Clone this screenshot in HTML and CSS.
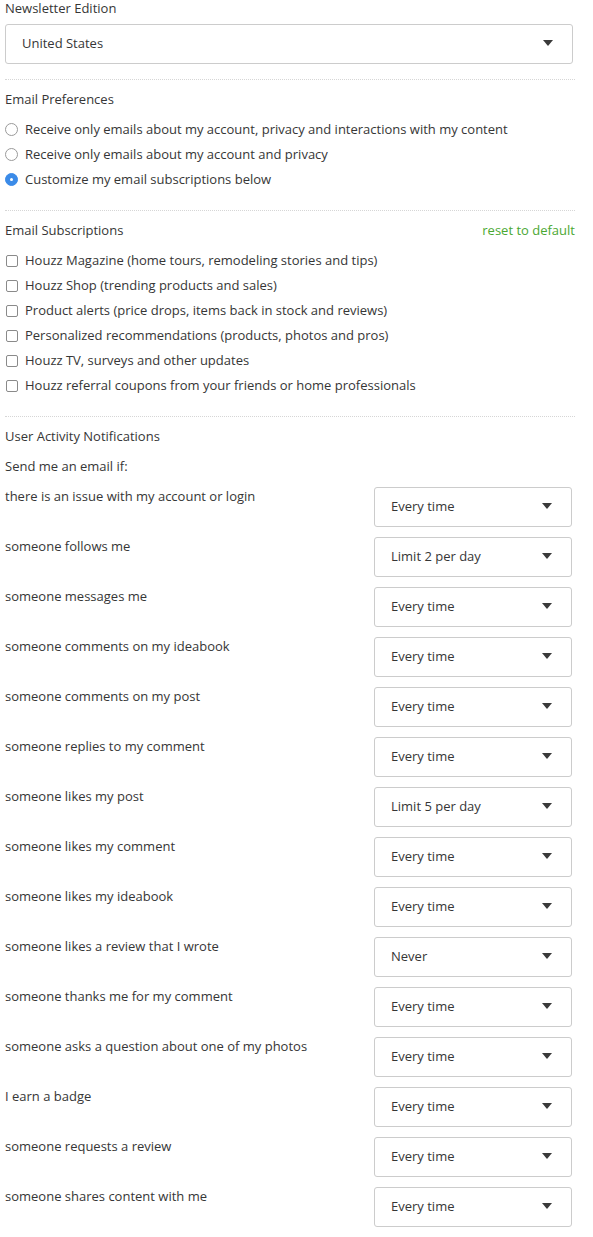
FILE: index.html
```html
<!DOCTYPE html>
<html>
<head>
<meta charset="utf-8">
<link rel="stylesheet" href="styles.css">
</head>
<body>
<div class="page">
  <section class="sec first">
    <div class="heading">Newsletter Edition</div>
    <div class="select wide"><span>United States</span><i class="caret"></i></div>
  </section>

  <section class="sec">
    <div class="heading">Email Preferences</div>
    <ul class="opts">
      <li><span class="radio"></span>Receive only emails about my account, privacy and interactions with my content</li>
      <li><span class="radio"></span>Receive only emails about my account and privacy</li>
      <li><span class="radio on"></span>Customize my email subscriptions below</li>
    </ul>
  </section>

  <section class="sec">
    <div class="heading row-head"><span>Email Subscriptions</span><a class="reset">reset to default</a></div>
    <ul class="opts">
      <li><span class="check"></span>Houzz Magazine (home tours, remodeling stories and tips)</li>
      <li><span class="check"></span>Houzz Shop (trending products and sales)</li>
      <li><span class="check"></span>Product alerts (price drops, items back in stock and reviews)</li>
      <li><span class="check"></span>Personalized recommendations (products, photos and pros)</li>
      <li><span class="check"></span>Houzz TV, surveys and other updates</li>
      <li><span class="check"></span>Houzz referral coupons from your friends or home professionals</li>
    </ul>
  </section>

  <section class="sec last">
    <div class="heading">User Activity Notifications</div>
    <div class="sub">Send me an email if:</div>
    <div class="notes">
      <div class="nrow"><div class="nlabel">there is an issue with my account or login</div><div class="select"><span>Every time</span><i class="caret"></i></div></div>
      <div class="nrow"><div class="nlabel">someone follows me</div><div class="select"><span>Limit 2 per day</span><i class="caret"></i></div></div>
      <div class="nrow"><div class="nlabel">someone messages me</div><div class="select"><span>Every time</span><i class="caret"></i></div></div>
      <div class="nrow"><div class="nlabel">someone comments on my ideabook</div><div class="select"><span>Every time</span><i class="caret"></i></div></div>
      <div class="nrow"><div class="nlabel">someone comments on my post</div><div class="select"><span>Every time</span><i class="caret"></i></div></div>
      <div class="nrow"><div class="nlabel">someone replies to my comment</div><div class="select"><span>Every time</span><i class="caret"></i></div></div>
      <div class="nrow"><div class="nlabel">someone likes my post</div><div class="select"><span>Limit 5 per day</span><i class="caret"></i></div></div>
      <div class="nrow"><div class="nlabel">someone likes my comment</div><div class="select"><span>Every time</span><i class="caret"></i></div></div>
      <div class="nrow"><div class="nlabel">someone likes my ideabook</div><div class="select"><span>Every time</span><i class="caret"></i></div></div>
      <div class="nrow"><div class="nlabel">someone likes a review that I wrote</div><div class="select"><span>Never</span><i class="caret"></i></div></div>
      <div class="nrow"><div class="nlabel">someone thanks me for my comment</div><div class="select"><span>Every time</span><i class="caret"></i></div></div>
      <div class="nrow"><div class="nlabel">someone asks a question about one of my photos</div><div class="select"><span>Every time</span><i class="caret"></i></div></div>
      <div class="nrow"><div class="nlabel">I earn a badge</div><div class="select"><span>Every time</span><i class="caret"></i></div></div>
      <div class="nrow"><div class="nlabel">someone requests a review</div><div class="select"><span>Every time</span><i class="caret"></i></div></div>
      <div class="nrow"><div class="nlabel">someone shares content with me</div><div class="select"><span>Every time</span><i class="caret"></i></div></div>
    </div>
  </section>
</div>
</body>
</html>
```

FILE: styles.css
```css
* { box-sizing: border-box; }
html, body { margin: 0; padding: 0; background: #fff; }
body {
  font-family: "Open Sans", "Liberation Sans", Arial, sans-serif;
  font-size: 13px;
  color: #363636;
}
.page {
  width: 570px;
  margin-left: 5px;
}
.sec {
  border-top: 1px dotted #d6d6d6;
  padding-top: 11px;
  padding-bottom: 18px;
}
.sec.first {
  border-top: 0;
  padding-top: 0;
  padding-bottom: 15px;
}
.sec.last { padding-bottom: 10px; }
.heading {
  line-height: 16px;
  height: 16px;
}
.row-head {
  display: flex;
  justify-content: space-between;
}
.reset { color: #4aa832; cursor: pointer; }
.first .heading { margin-bottom: 8px; }
.select {
  height: 40px;
  border: 1px solid #cccccc;
  border-radius: 3px;
  display: flex;
  align-items: center;
  justify-content: space-between;
  padding: 0 19px 2px 16px;
  background: #fff;
}
.select.wide { width: 568px; }
.caret {
  width: 0; height: 0;
  border-left: 5px solid transparent;
  border-right: 5px solid transparent;
  border-top: 6px solid #3a3a3a;
}
.opts {
  list-style: none;
  margin: 10px 0 0;
  padding: 0;
}
.opts li {
  height: 25px;
  line-height: 25px;
  display: flex;
  align-items: center;
}
.radio {
  width: 13px; height: 13px;
  border: 1px solid #9a9a9a;
  border-radius: 50%;
  margin-right: 7px;
  flex: none;
  position: relative;
}
.radio.on {
  background: #3b8be8;
  border-color: #3b8be8;
}
.radio.on::after {
  content: "";
  position: absolute;
  left: 4px; top: 4px;
  width: 3px; height: 3px;
  border-radius: 50%;
  background: #fff;
}
.check {
  width: 12px; height: 12px;
  border: 1px solid #8a8a8a;
  border-radius: 2px;
  margin: 0 7px 0 1px;
  flex: none;
}
.sub {
  margin-top: 14px;
  line-height: 16px;
}
.notes { margin-top: 13px; }
.nrow {
  display: flex;
  justify-content: space-between;
  align-items: flex-start;
  height: 40px;
  margin-bottom: 10px;
}
.nlabel {
  line-height: 16px;
  padding-top: 1px;
}
.nrow .select { width: 198px; margin-right: 3px; }
```
